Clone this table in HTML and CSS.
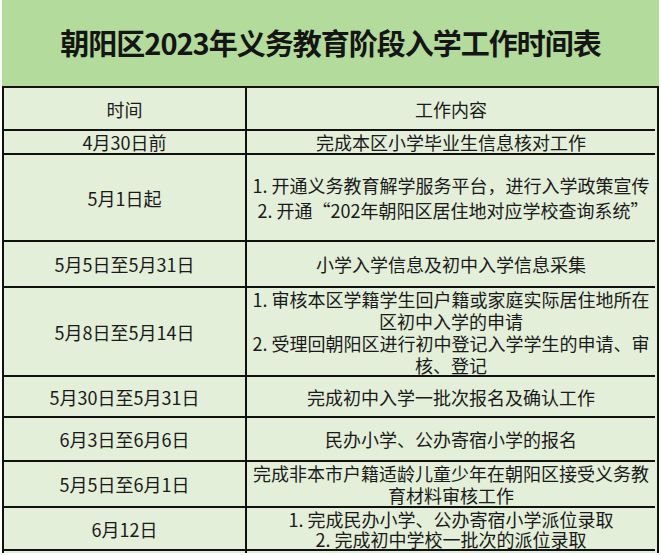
FILE: index.html
```html
<!DOCTYPE html>
<html lang="zh-CN">
<head>
<meta charset="utf-8">
<title>朝阳区2023年义务教育阶段入学工作时间表</title>
<link rel="stylesheet" href="styles.css">
</head>
<body>
<div class="sheet">
  <div class="title">朝阳区2023年义务教育阶段入学工作时间表</div>
  <div class="grid">
    <div class="cell left head">时间</div>
    <div class="cell right head">工作内容</div>

    <div class="cell left r1">4月30日前</div>
    <div class="cell right r1">完成本区小学毕业生信息核对工作</div>

    <div class="cell left r2">5月1日起</div>
    <div class="cell right r2 loose">1. 开通义务教育解学服务平台，进行入学政策宣传<br>&nbsp;2. 开通“202年朝阳区居住地对应学校查询系统”</div>

    <div class="cell left r3">5月5日至5月31日</div>
    <div class="cell right r3">小学入学信息及初中入学信息采集</div>

    <div class="cell left r4">5月8日至5月14日</div>
    <div class="cell right r4">1. 审核本区学籍学生回户籍或家庭实际居住地所在区初中入学的申请<br>2. 受理回朝阳区进行初中登记入学学生的申请、审核、登记</div>

    <div class="cell left r5">5月30日至5月31日</div>
    <div class="cell right r5">完成初中入学一批次报名及确认工作</div>

    <div class="cell left r6">6月3日至6月6日</div>
    <div class="cell right r6">民办小学、公办寄宿小学的报名</div>

    <div class="cell left r7">5月5日至6月1日</div>
    <div class="cell right r7">完成非本市户籍适龄儿童少年在朝阳区接受义务教育材料审核工作</div>

    <div class="cell left r8">6月12日</div>
    <div class="cell right r8 tight">1. 完成民办小学、公办寄宿小学派位录取<br>2. 完成初中学校一批次的派位录取</div>

    <div class="cell left r9"></div>
    <div class="cell right r9"></div>
  </div>
</div>
</body>
</html>
```

FILE: styles.css
```css
html, body {
  margin: 0;
  padding: 0;
  background: #ffffff;
}

body {
  font-family: "Noto Sans CJK SC", "Noto Sans", sans-serif;
  color: #1a1a1a;
  overflow: hidden;
  height: 555px;
}

.sheet {
  width: 657px;
  margin-left: 2px;
}

.title {
  height: 88px;
  background: #b3db9b;
  border-bottom: 2px solid #111;
  display: flex;
  align-items: center;
  justify-content: center;
  font-size: 29px;
  font-weight: 700;
  color: #151515;
  letter-spacing: -1px;
  padding-bottom: 2px;
  box-sizing: border-box;
}

.grid {
  display: grid;
  grid-template-columns: 243px 408px;
  border-left: 2px solid #111;
  border-right: 2px solid #111;
  background: #e3efd9;
}

.cell {
  border-bottom: 2px solid #111;
  display: flex;
  align-items: center;
  justify-content: center;
  text-align: center;
  font-size: 18px;
  line-height: 22px;
  padding: 0 6px;
}

.left {
  border-right: 2px solid #111;
}

.right {
  padding: 0 4px;
}

.loose {
  line-height: 25px;
}

.tight {
  line-height: 20px;
}

.head { height: 41px; }
.r1 { height: 22px; }
.r2 { height: 85px; }
.r3 { height: 44px; }
.r4 { height: 87px; }
.r5 { height: 39px; }
.r6 { height: 42px; }
.r7 { height: 44px; line-height: 22px; }
.r8 { height: 41px; }
.r9 { height: 2px; border-bottom: none; }
```
